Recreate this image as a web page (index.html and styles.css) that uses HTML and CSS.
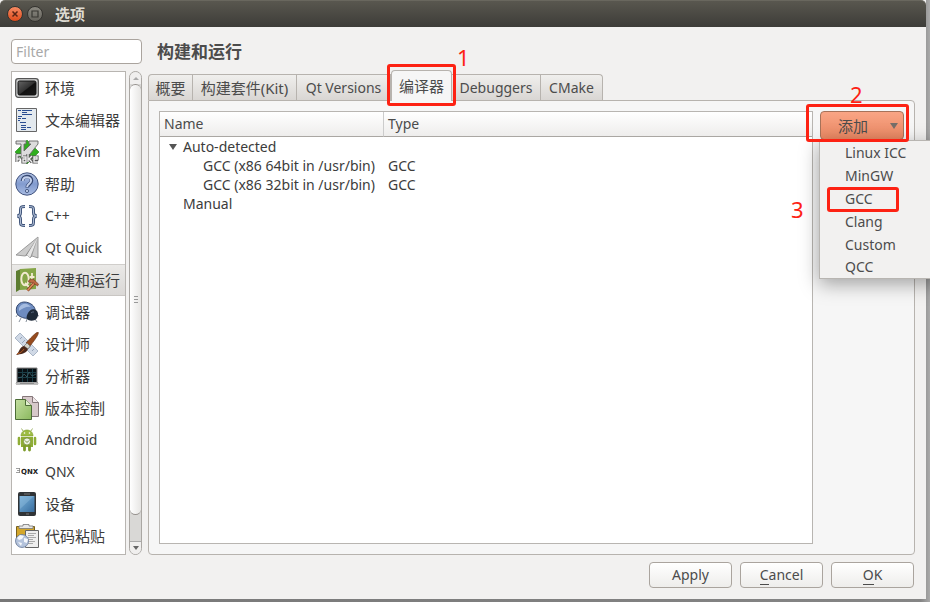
FILE: index.html
```html
<!DOCTYPE html>
<html lang="zh-CN">
<head>
<meta charset="utf-8">
<meta name="viewport" content="width=device-width, initial-scale=1">
<title>选项</title>
<link rel="stylesheet" href="styles.css">
</head>
<body>
<div class="window">
  <header class="titlebar">
    <button class="wm close" type="button" aria-label="关闭"><svg viewBox="0 0 14 14"><path d="M4.5 4.5l5 5m0-5l-5 5" stroke="#582415" stroke-width="1.5"/></svg></button>
    <button class="wm maximize" type="button" aria-label="最大化"><svg viewBox="0 0 14 14"><path d="M4 4h6v6H4z" fill="none" stroke="#383732" stroke-width="1.2"/></svg></button>
    <h1 class="title">选项</h1>
  </header>
  <div class="content">
    <aside class="sidebar">
      <input class="filter" type="text" placeholder="Filter" aria-label="Filter">
      <div class="list-area">
        <nav class="categories">
          <a class="category cjk" href="#"><svg class="icon" viewBox="0 0 24 24"><defs><linearGradient id="screen" x2="1" y2="1"><stop stop-color="#666"/><stop offset=".5" stop-color="#333"/><stop offset=".55" stop-color="#111"/><stop offset="1" stop-color="#1b1b1b"/></linearGradient></defs><rect x=".7" y="2.7" width="22.6" height="18.6" rx="2.5" fill="#d4d6d6" stroke="#555" stroke-width="1.3"/><rect x="3" y="5" width="18" height="14" rx="1.5" fill="url(#screen)" stroke="#111"/></svg><span>环境</span></a>
          <a class="category cjk" href="#"><svg class="icon" viewBox="0 0 24 24"><path d="M1.5.5h20v23h-20z" fill="#e3e9ee" stroke="#666"/><path d="M3 2.5h3m1 0h10M7 4.5h5M7 6.5h10M3 8.5h4M3 10.5h3m1 0h4M3 12.5h2M5 14.5h6M6 17.5h5M6 19.5h5m1 0h4M6 21.5h5" stroke="#2a4d91"/></svg><span>文本编辑器</span></a>
          <a class="category" href="#"><svg class="icon" viewBox="0 0 24 24"><path d="M12 0l12 12-12 12L0 12z" fill="#2fae1d" stroke="#23801b" stroke-width=".6"/><path d="M1 1h10v3H9v7l7-7h-2V1h9v3L11 19H6V4H1z" fill="#dcdcdc" stroke="#666" stroke-width=".9"/><g fill="none" stroke="#555" stroke-width="3.2"><path d="M2 22v-7h4m-4 4h3M8 17h3v5H8v-3h3m2 3v-8m4 2l-3 3 3 3m2-3h3v-2h-3v5h4"/></g><g fill="none" stroke="#eee" stroke-width="1.4"><path d="M2 22v-7h4m-4 4h3M8 17h3v5H8v-3h3m2 3v-8m4 2l-3 3 3 3m2-3h3v-2h-3v5h4"/></g></svg><span>FakeVim</span></a>
          <a class="category cjk" href="#"><svg class="icon" viewBox="0 0 24 24"><defs><linearGradient id="help" x2="0" y2="1"><stop stop-color="#b5c5e5"/><stop offset=".5" stop-color="#829bcf"/><stop offset="1" stop-color="#a9bce2"/></linearGradient></defs><circle cx="12" cy="12" r="11.2" fill="url(#help)" stroke="#44557e"/><path d="M7.5 9c0-6 9-6 9-.5 0 3.5-4.3 3.5-4.3 7" fill="none" stroke="#354771" stroke-width="3.6"/><path d="M7.8 9c0-5 8.3-5 8.3-.5 0 3-4 3.5-4 6.5" fill="none" stroke="#c5d2ed" stroke-width="2"/><circle cx="12" cy="19" r="1.6" fill="#c5d2ed" stroke="#354771" stroke-width=".8"/></svg><span>帮助</span></a>
          <a class="category" href="#"><svg class="icon" viewBox="0 0 24 24"><g fill="none"><path d="M10 2.5C6 2.5 5.5 3 5.5 6v2.500c0 2-1 3.500-3.500 3.500 2.500 0 3.500 1.500 3.500 3.500V18c0 3 .5 3.500 4.500 3.500M14 2.500c4 0 4.500.5 4.500 3.500v2.500c0 2 1 3.500 3.500 3.500-2.500 0-3.500 1.500-3.500 3.500V18c0 3-.5 3.500-4.500 3.500" stroke="#3d5278" stroke-width="3"/><path d="M10 2.500C6 2.500 5.500 3 5.500 6v2.500c0 2-1 3.500-3.500 3.500 2.500 0 3.500 1.500 3.500 3.500V18c0 3 .5 3.500 4.500 3.500M14 2.500c4 0 4.500.5 4.500 3.500v2.500c0 2 1 3.500 3.500 3.500-2.500 0-3.500 1.500-3.500 3.500V18c0 3-.5 3.500-4.500 3.500" stroke="#adbbd3" stroke-width="1.100"/></g></svg><span>C++</span></a>
          <a class="category" href="#"><svg class="icon" viewBox="0 0 24 24"><path d="M23 1L1 19l9 1 2-1 3 3 2-2 6 2z" fill="#ccc" stroke="#888" stroke-width=".8"/><path d="M23 1L10 20l2-1z" fill="#888"/><path d="M23 1L12 19l3 3z" fill="#e6e6e6"/><path d="M23 1l-6 19-2 2" fill="#999"/></svg><span>Qt Quick</span></a>
          <a class="category cjk selected" href="#" aria-current="page"><svg class="icon" viewBox="0 0 24 24"><path d="M1 3l5-2v20l-5 3z" fill="#5c7c30"/><path d="M5 1l16-1v21l-16 1z" fill="#85a547"/><ellipse cx="10" cy="11" rx="3.700" ry="6.300" fill="none" stroke="#f3ead2" stroke-width="1.900"/><path d="M10 15l4 4M17 5v9q0 3 2 3M14.500 9h5" fill="none" stroke="#f3ead2" stroke-width="1.800"/><path d="M12.500 22.500l7-8" stroke="#7d3a20" stroke-width="3"/><path d="M12.500 22.500l7-8" stroke="#dc8d5b" stroke-width="1.600"/><path d="M14 12l4-1 5.500 5-1 2-4-3-5-1z" fill="#bd6a42" stroke="#7c3f28" stroke-width=".7"/></svg><span>构建和运行</span></a>
          <a class="category cjk" href="#"><svg class="icon" viewBox="0 0 24 24"><path d="M3 14l-2 3m5 1l-2 4m8-3l-1 3m9-3l2 3m0-7l2 1" stroke="#7c8591" stroke-width=".9"/><path d="M1.500 12C0 4 7 0 14 3c5 2 7 6 6 10-1 4-6 6-11 5-4-1-7-3-7.500-6z" fill="#6e8cc0" stroke="#35496f"/><path d="M4 8c3-6 9-5 12-1-4-1-8 1-12 4z" fill="#a6bce0"/><path d="M13 13c2-4 6-5 9-2 2 3 1 7-2 9-3 1-6 1-8-1-1-2 0-4 1-6z" fill="#1d2938"/><path d="M16 13c1-1 2-1 3-1" stroke="#60718b"/></svg><span>调试器</span></a>
          <a class="category cjk" href="#"><svg class="icon" viewBox="0 0 24 24"><path d="M5 1l18 18-5 5L0 6z" fill="#d0d9e6" stroke="#9ca9bb" stroke-width=".8"/><path d="M7 5L5 7m5 1l-3 3m6 0l-2 2m5 1l-3 3m6 0l-2 2" stroke="#8797ad" stroke-width=".8"/><path d="M23 0c1 1 0 4-8 14l-4-3C18 3 22 0 23 0z" fill="#964b1e" stroke="#5c2b13" stroke-width=".6"/><path d="M12 11l3 3-2 3-4-3z" fill="#d5d3c8" stroke="#666" stroke-width=".6"/><path d="M9 14l4 3c-2 5-7 5-12 6 4-3 3-8 8-9z" fill="#4b281a"/><path d="M9 17c-2 3-4 4-7 5" stroke="#b75c22" fill="none"/></svg><span>设计师</span></a>
          <a class="category cjk" href="#"><svg class="icon" viewBox="0 0 24 24"><path d="M2 4h20v14l1 2H1l1-2z" fill="#aaa" stroke="#666" stroke-width=".8"/><path d="M2.500 4.500h19V18h-19z" fill="#080f13"/><path d="M3 8.500h18M3 13.500h18M7.500 5v13m5-13v13m5-13v13" stroke="#1a3d46"/><path d="M3 14l4-1 2-3 3 3 2-5 3 4 4-2" fill="none" stroke="#3b626b" stroke-width=".8"/><path d="M1 20h4m14 0h4" stroke="#bbb" stroke-width="2"/></svg><span>分析器</span></a>
          <a class="category cjk" href="#"><svg class="icon" viewBox="0 0 24 24"><path d="M7.500.5h10l6 6v14h-16z" fill="#d7c8ca" stroke="#85777a"/><path d="M17.500.5v6h6" fill="#f0e6e8" stroke="#85777a"/><defs><linearGradient id="page" x2="1" y2="1"><stop stop-color="#c4dfa1"/><stop offset="1" stop-color="#8bb85e"/></linearGradient></defs><path d="M.5 3.500h10l6 6v14H.5z" fill="url(#page)" stroke="#4c6c36"/><path d="M10.500 3.500v6h6" fill="#e2efcf" stroke="#4c6c36"/></svg><span>版本控制</span></a>
          <a class="category" href="#"><svg class="icon" viewBox="0 0 24 24"><path d="M8 3L6.500.5m9.500 2.500L17.500.5" stroke="#8ba548" stroke-width=".8"/><path d="M6 8c0-8 12-8 12 0z" fill="#9dbb42" stroke="#7f9d31" stroke-width=".6"/><path d="M6 9h12v10H6z" fill="#8fad36"/><path d="M4 10v6m16-6v6" stroke="#8fad36" stroke-width="2.600" stroke-linecap="round"/><path d="M9.500 18v4m5-4v4" stroke="#7e9c2d" stroke-width="2.800" stroke-linecap="round"/><circle cx="9.500" cy="5" r=".8" fill="#fff"/><circle cx="14.500" cy="5" r=".8" fill="#fff"/><circle cx="12" cy="13.500" r="3.600" fill="#edf2e5" stroke="#718c34" stroke-width=".8"/><path d="M10 12.500l2 2 2-2" fill="none" stroke="#718c34"/></svg><span>Android</span></a>
          <a class="category" href="#"><svg class="icon" viewBox="0 0 24 24"><path d="M1 8.500h4M2 10.500h3M1 12.500h4M4.500 8v5" stroke="#888" fill="none" stroke-width=".8"/><text class="qnx-mark" x="6" y="14">QNX</text></svg><span>QNX</span></a>
          <a class="category cjk" href="#"><svg class="icon" viewBox="0 0 24 24"><defs><linearGradient id="device" x2="1" y2="1"><stop stop-color="#7bb4dc"/><stop offset="1" stop-color="#376c9e"/></linearGradient></defs><rect x="3" y="0" width="18" height="24" rx="2" fill="#303336"/><path d="M4.500 4h15v16h-15z" fill="url(#device)"/><path d="M5 4h14L5 17z" fill="#8dbbdb" opacity=".45"/><path d="M9 2h6m-4 20h3" stroke="#777"/></svg><span>设备</span></a>
          <a class="category cjk" href="#"><svg class="icon" viewBox="0 0 24 24"><path d="M1.500 2.500h18V20h-18z" fill="#d4a72b" stroke="#77601f"/><path d="M4 4.500V2h4V.5h6V2h4v2.500z" fill="#e8e8e8" stroke="#777" stroke-width=".8"/><path d="M10.500 6.500h13v17h-13z" fill="#efefef" stroke="#666"/><path d="M13 9.500h8m-8 2h6m-6 2h8m-8 2h5m-5 2h7m-7 2h5" stroke="#aaa"/><circle cx="7" cy="17" r="6.500" fill="#b4c3dc" stroke="#647799" stroke-width=".8"/><path d="M2 14l3-3 4 1-2 3-3 1zm7 0l4 1-1 4-3-1zm-6 4l4 1-1 3z" fill="#f5f8fc"/></svg><span>代码粘贴</span></a>
        </nav>
        <div class="scrollbar" aria-hidden="true">
          <span class="scroll-up"></span>
          <span class="thumb"><i></i><i></i><i></i></span>
          <span class="scroll-down"></span>
        </div>
      </div>
    </aside>
    <main class="main">
      <h2 class="heading">构建和运行</h2>
      <div class="tabs" role="tablist">
        <button class="tab cjk summary" type="button" role="tab">概要</button>
        <button class="tab cjk kit" type="button" role="tab">构建套件(Kit)</button>
        <button class="tab versions" type="button" role="tab">Qt Versions</button>
        <div class="marked-tab">
          <button class="tab cjk active" type="button" role="tab" aria-selected="true">编译器</button>
          <span class="mark mark-tab"></span><span class="step step-one">1</span>
        </div>
        <button class="tab debuggers" type="button" role="tab">Debuggers</button>
        <button class="tab cmake" type="button" role="tab">CMake</button>
      </div>
      <section class="panel">
        <div class="tree">
          <table class="compilers">
            <thead><tr><th class="name-col">Name</th><th>Type</th></tr></thead>
            <tbody>
              <tr><td class="group open">Auto-detected</td><td></td></tr>
              <tr><td class="leaf">GCC (x86 64bit in /usr/bin)</td><td>GCC</td></tr>
              <tr><td class="leaf">GCC (x86 32bit in /usr/bin)</td><td>GCC</td></tr>
              <tr><td class="group">Manual</td><td></td></tr>
            </tbody>
          </table>
        </div>
        <div class="actions">
          <div class="add-wrap">
            <button class="add cjk" type="button" aria-haspopup="menu" aria-expanded="true">添加<span class="arrow"></span></button>
            <div class="menu" role="menu">
              <button class="item" type="button" role="menuitem">Linux ICC</button>
              <button class="item" type="button" role="menuitem">MinGW</button>
              <button class="item" type="button" role="menuitem">GCC<span class="mark mark-item"></span></button>
              <button class="item" type="button" role="menuitem">Clang</button>
              <button class="item" type="button" role="menuitem">Custom</button>
              <button class="item" type="button" role="menuitem">QCC</button>
              <span class="step step-three">3</span>
            </div>
            <span class="mark mark-add"></span><span class="step step-two">2</span>
          </div>
        </div>
      </section>
    </main>
  </div>
  <footer class="footer">
    <button class="push" type="button">Apply</button>
    <button class="push" type="button"><span class="key">C</span>ancel</button>
    <button class="push" type="button"><span class="key">O</span>K</button>
  </footer>
</div>
</body>
</html>
```
FILE: styles.css
```css
* { box-sizing: border-box; }

body {
  margin: 0;
  min-height: 100vh;
  padding: 0 4px 3px 0;
  overflow: hidden;
  background: linear-gradient(to right, #777, #858585 99%, #aaa);
  color: #4c4c4c;
  font: 14px/20px "Noto Sans", "Noto Sans CJK SC", sans-serif;
}

button, input { font: inherit; color: inherit; margin: 0; }
button { padding: 0; border: 0; background: none; }

.cjk { font-size: 15px; }

.window {
  display: flex;
  flex-direction: column;
  min-height: calc(100vh - 3px);
  background: #f2f1f0;
}

.titlebar {
  display: flex;
  align-items: center;
  gap: 4px;
  height: 27px;
  padding-left: 7px;
  border-top: 1px solid #69675e;
  border-radius: 5px 5px 0 0;
  background: linear-gradient(#59574f, #3d3c38);
}
.wm { width: 16px; height: 16px; border-radius: 50%; border: 1px solid #34332f; }
.wm svg { display: block; width: 14px; height: 14px; }
.close { background: linear-gradient(#f58a63, #df4b1b); }
.maximize { background: linear-gradient(#8b8981, #65635c); }
.title { margin: 0 0 0 8px; color: #dfdbd2; font-size: 15px; line-height: 20px; }

.content { display: flex; flex: 1; gap: 6px; padding: 12px 11px 7px; }

.sidebar { display: flex; flex-direction: column; gap: 7px; width: 131px; }
.filter {
  width: 100%;
  height: 25px;
  padding: 0 4px;
  border: 1px solid #aaa49e;
  border-radius: 4px;
  background: #fff;
  outline: 0;
}
.filter::placeholder { color: #a9a9a9; opacity: 1; }

.list-area { display: flex; flex: 1; gap: 3px; }
.categories { flex: 1; border: 1px solid #b8b5b1; background: #fff; }
.category {
  display: flex;
  align-items: center;
  gap: 6px;
  height: 32px;
  padding-left: 3px;
  color: #3c3c3c;
  text-decoration: none;
  white-space: nowrap;
}
.selected { background: linear-gradient(#eae9e7, #dad8d6); border-top: 1px solid #d0cecb; border-bottom: 1px solid #c9c6c3; }
.icon { flex: none; width: 24px; height: 24px; }
.qnx-mark { font: bold 7px "DejaVu Sans", sans-serif; fill: #222; }

.scrollbar {
  display: flex;
  flex-direction: column;
  width: 13px;
  border: 1px solid #aaa7a3;
  border-radius: 7px;
  background: #d9d8d6;
  overflow: hidden;
}
.scroll-up, .scroll-down { display: grid; place-items: center; height: 12px; background: #f0efee; }
.scroll-up::before { content: ""; border: 3px solid transparent; border-top: 0; border-bottom: 3px solid #aaa; }
.scroll-down { height: 13px; border-top: 1px solid #aaa; }
.scroll-down::before { content: ""; border: 3px solid transparent; border-bottom: 0; border-top: 4px solid #666; }
.thumb {
  display: flex;
  flex: 1;
  flex-direction: column;
  align-items: center;
  justify-content: center;
  gap: 2px;
  margin-bottom: 26px;
  border: solid #96928e;
  border-width: 1px 0;
  border-radius: 6px;
  background: linear-gradient(to right, #fff, #e7e6e4);
}
.thumb i { width: 4px; height: 1px; background: #999; }

.main { display: flex; flex: 1; flex-direction: column; min-width: 0; }
.heading { margin: 0 0 5px 9px; font-size: 17px; line-height: 26px; }

.tabs { display: flex; align-items: flex-end; height: 30px; }
.tab {
  height: 26px;
  padding: 0 7px;
  border: 1px solid #b7b3ae;
  border-bottom: 0;
  border-left-width: 0;
  background: linear-gradient(#f0efed, #d9d6d3);
  white-space: nowrap;
}
.tab:first-child { border-left-width: 1px; border-radius: 4px 0 0; }
.tab:last-child { border-radius: 0 4px 0 0; }
.summary { width: 45px; padding: 0 6px; }
.kit { width: 104px; }
.versions { width: 94px; }
.debuggers { width: 89px; padding: 0 5px; }
.cmake { width: 62px; }
.marked-tab { position: relative; z-index: 2; width: 61px; }
.tab.active {
  width: 100%;
  height: 31px;
  margin-bottom: -1px;
  border-left-width: 1px;
  border-radius: 4px 4px 0 0;
  background: #f6f6f6;
}

.panel {
  display: flex;
  flex: 1;
  gap: 6px;
  padding: 10px;
  border: 1px solid #b7b3ae;
  border-radius: 0 4px 4px;
  background: #f6f6f6;
}
.tree { flex: 1; border: 1px solid #b8b5b1; background: #fff; }
.compilers { width: 100%; border-collapse: separate; border-spacing: 0; table-layout: fixed; }
.compilers th {
  height: 25px;
  padding: 0 4px;
  border-bottom: 1px solid #aaa7a3;
  background: linear-gradient(#fff, #eeedec);
  font-weight: normal;
  text-align: left;
}
.compilers .name-col { width: 224px; border-right: 1px solid #ccc; }
.compilers td { padding: 0 4px; line-height: 19px; color: #3c3c3c; white-space: nowrap; }
.compilers .group { padding-left: 23px; }
.compilers .open { padding-left: 9px; }
.open::before {
  content: "";
  display: inline-block;
  margin-right: 6px;
  border: 4px solid transparent;
  border-top: 6px solid #555;
  border-bottom: 2px solid transparent;
}
.compilers .leaf { padding: 0 0 0 43px; }

.actions { width: 85px; }
.add-wrap { position: relative; }
.add {
  display: flex;
  align-items: center;
  justify-content: flex-end;
  gap: 22px;
  width: 84px;
  height: 29px;
  margin-left: 1px;
  padding-right: 5px;
  border: 1px solid #a77259;
  border-radius: 4px;
  background: linear-gradient(#f9a585, #e98762);
}
.arrow { border: 4px solid transparent; border-top: 6px solid #776e69; border-bottom: 0; }

.menu {
  position: absolute;
  z-index: 3;
  top: 29px;
  left: 0;
  width: 124px;
  border: 1px solid #b8b5b1;
  background: #f2f1f0;
  box-shadow: 0 5px 18px rgba(0, 0, 0, .35);
}
.item { position: relative; display: block; width: 100%; height: 23px; padding-left: 25px; text-align: left; }
.item:last-of-type { height: 22px; }

/* Red annotation frames and step numbers over the dialog */
.mark { position: absolute; z-index: 4; border: 3px solid #fd2213; border-radius: 3px; pointer-events: none; }
.mark-tab { top: -6px; left: -4px; width: 69px; height: 42px; }
.mark-add { top: -7px; left: -13px; width: 103px; height: 38px; }
.mark-item { top: 0; left: 7px; width: 72px; height: 25px; }
.step { position: absolute; z-index: 4; color: #fd2213; font-size: 22px; line-height: 24px; }
.step-one { top: -25px; left: 66px; }
.step-two { top: -29px; left: 31px; }
.step-three { top: 56px; left: -29px; }

.footer { display: flex; justify-content: flex-end; gap: 8px; padding: 0 12px 11px; }
.push {
  width: 83px;
  height: 26px;
  border: 1px solid #aaa49e;
  border-radius: 4px;
  background: linear-gradient(#fff, #eeedeb);
}
.key { display: inline-block; height: 20px; border-bottom: 1px solid #4c4c4c; }
```
